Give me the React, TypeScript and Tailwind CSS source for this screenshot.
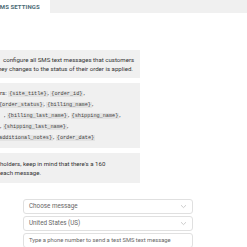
import React from 'react';

const sans = "font-['Roboto','Liberation_Sans',sans-serif]";
const mono = "font-['Liberation_Mono','DejaVu_Sans_Mono',monospace]";

function Code({ children }: { children: React.ReactNode }) {
  return <code className={`${mono} bg-[#e3e3e3] px-[1px] text-[5.2px] text-[#444]`}>{children}</code>;
}

function Chevron() {
  return (
    <svg width="7" height="5" viewBox="0 0 7 5" className="shrink-0">
      <path d="M1 1.2 L3.5 3.6 L6 1.2" fill="none" stroke="#c0c0c0" strokeWidth="0.8" />
    </svg>
  );
}

function Field({ label, select, small }: { label: string; select?: boolean; small?: boolean }) {
  return (
    <div className="flex h-[15px] items-center justify-between rounded-[3px] border border-[#e0e0e0] bg-white pl-[5px] pr-[5px]">
      <span className={`whitespace-nowrap text-[#666] ${small ? 'text-[5.8px]' : 'text-[6.3px]'}`}>{label}</span>
      {select && <Chevron />}
    </div>
  );
}

export default function App() {
  return (
    <div className={`${sans} h-[247px] w-[247px] overflow-hidden bg-white`}>
      <div className="flex h-[13px] bg-[#f0f0f0]">
        <div className="flex w-[50px] items-center overflow-hidden bg-white">
          <span className="ml-[-4px] whitespace-nowrap text-[6px] font-bold tracking-[0.1px] text-[#4b6b75]">
            SMS SETTINGS
          </span>
        </div>
      </div>

      <div className="mt-[37px] flex w-[140px] flex-col gap-[5px] text-[6.1px] leading-[9px] text-[#333]">
        <div className="overflow-hidden bg-[#f0f0f0] py-[5px] whitespace-nowrap">
          <div className="pl-[3px]">configure all SMS text messages that customers</div>
          <div className="ml-[-2px]">hey changes to the status of their order is applied.</div>
        </div>

        <div className="overflow-hidden bg-[#f0f0f0] py-[5px] whitespace-nowrap">
          <div>rs: <Code>{'{site_title}'}</Code>, <Code>{'{order_id}'}</Code>,</div>
          <div className="ml-[-2px]"><Code>{'{order_status}'}</Code>, <Code>{'{billing_name}'}</Code>,</div>
          <div className="ml-[4px]">, <Code>{'{billing_last_name}'}</Code>, <Code>{'{shipping_name}'}</Code>,</div>
          <div>, <Code>{'{shipping_last_name}'}</Code>,</div>
          <div className="ml-[-5px]"><Code>{'{additional_notes}'}</Code>, <Code>{'{order_date}'}</Code></div>
        </div>

        <div className="overflow-hidden bg-[#f0f0f0] py-[6px] whitespace-nowrap">
          <div>holders, keep in mind that there's a 160</div>
          <div>each message.</div>
        </div>
      </div>

      <div className="ml-[23px] mt-[16px] flex w-[170px] flex-col gap-[2px]">
        <Field label="Choose message" select />
        <Field label="United States (US)" select />
        <Field label="Type a phone number to send a test SMS text message" small />
        <div className="mt-[2px] flex gap-[5px]">
          <div className="h-[15px] w-[49px] rounded-[3px] border border-[#e0e0e0]" />
          <div className="h-[15px] flex-1 border-t border-[#e0e0e0]" />
        </div>
      </div>
    </div>
  );
}
